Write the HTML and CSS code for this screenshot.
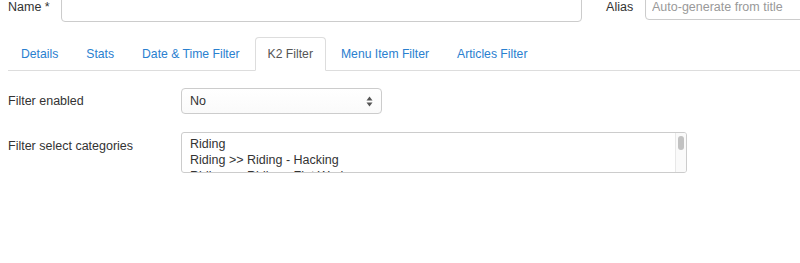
FILE: index.html
```html
<!DOCTYPE html>
<html>
<head>
    <title>Module - K2 Filter</title>
    <link rel="stylesheet" href="styles.css">
</head>
<body>

<div class="page">
    <div class="title-row">
        <label class="title-label name-label">Name *</label>
        <input class="title-input name-input" type="text">
        <label class="title-label alias-label">Alias</label>
        <input class="title-input alias-input" type="text" placeholder="Auto-generate from title">
    </div>

    <ul class="tabs">
        <li><a href="#">Details</a></li>
        <li><a href="#">Stats</a></li>
        <li><a href="#">Date &amp; Time Filter</a></li>
        <li class="active"><a href="#">K2 Filter</a></li>
        <li><a href="#">Menu Item Filter</a></li>
        <li><a href="#">Articles Filter</a></li>
    </ul>

    <div class="field">
        <div class="field-label">Filter enabled</div>
        <div class="select">
            <span>No</span>
            <svg class="select-arrows" width="7" height="11" viewBox="0 0 7 11">
                <path d="M3.5 0.5 L6.5 4.5 L0.5 4.5 Z" fill="#555"/>
                <path d="M3.5 10.5 L6.5 6.5 L0.5 6.5 Z" fill="#555"/>
            </svg>
        </div>
    </div>

    <div class="field">
        <div class="field-label">Filter select categories</div>
        <div class="listbox">
            <div class="listbox-options">
                <div>Riding</div>
                <div>Riding &gt;&gt; Riding - Hacking</div>
                <div>Riding &gt;&gt; Riding - Flat Work</div>
            </div>
            <div class="scrolltrack"><div class="scrollthumb"></div></div>
        </div>
    </div>
</div>

</body>
</html>
```

FILE: styles.css
```css
body {
    margin: 0;
    background-color: #fff;
    font-family: "Liberation Sans", Arial, sans-serif;
    font-size: 12.5px;
    color: #333;
    overflow: hidden;
}

.page {
    padding: 0 0 0 8px;
}

.title-row {
    display: flex;
    align-items: flex-start;
    margin-top: -10px;
}

.title-label {
    padding-top: 8px;
    line-height: 18px;
}

.name-label {
    width: 53px;
}

.title-input {
    box-sizing: border-box;
    height: 30px;
    padding: 8px 6px 4px;
    border: 1px solid #ccc;
    border-radius: 4px;
    font-family: inherit;
    font-size: 12.5px;
    color: #555;
    outline: none;
    box-shadow: inset 0 1px 1px rgba(0, 0, 0, 0.06);
}

.name-input {
    width: 522px;
    height: 32px;
}

.alias-label {
    margin-left: 24px;
    width: 39px;
}

.alias-input {
    flex: 1;
    margin-right: -20px;
}

.alias-input::placeholder {
    color: #999;
}

.tabs {
    display: flex;
    list-style: none;
    margin: 15px 0 0;
    padding: 0;
    border-bottom: 1px solid #ddd;
    font-size: 12.2px;
}

.tabs li {
    margin-right: 2px;
    margin-bottom: -1px;
}

.tabs a {
    display: block;
    padding: 7px 12px;
    line-height: 18px;
    border: 1px solid transparent;
    border-radius: 4px 4px 0 0;
    color: #2a80cf;
    text-decoration: none;
}

.tabs li.active a {
    color: #555;
    background-color: #fff;
    border-color: #ddd #ddd transparent;
}

.field {
    display: flex;
    align-items: flex-start;
}

.field + .field {
    margin-top: 18px;
}

.tabs + .field {
    margin-top: 17px;
}

.field-label {
    width: 173px;
    padding-top: 4px;
    line-height: 18px;
}

.field + .field .field-label {
    padding-top: 5px;
}

.select {
    box-sizing: border-box;
    display: flex;
    align-items: center;
    justify-content: space-between;
    width: 201px;
    height: 26px;
    padding: 0 8px 0 8px;
    border: 1px solid #ccc;
    border-radius: 4px;
    background: linear-gradient(#fff, #fafafa);
    color: #333;
}

.listbox {
    position: relative;
    box-sizing: border-box;
    width: 506px;
    height: 41px;
    padding: 3px 0 0 8px;
    border: 1px solid #ccc;
    border-radius: 3px;
    overflow: hidden;
    line-height: 16px;
    color: #333;
}

.scrolltrack {
    position: absolute;
    top: 0;
    right: 0;
    bottom: 0;
    width: 10px;
    border-left: 1px solid #e8e8e8;
    background-color: #fafafa;
}

.scrollthumb {
    margin: 3px 0 0 2px;
    width: 6px;
    height: 14px;
    border-radius: 3px;
    background-color: #c2c2c2;
}
```
